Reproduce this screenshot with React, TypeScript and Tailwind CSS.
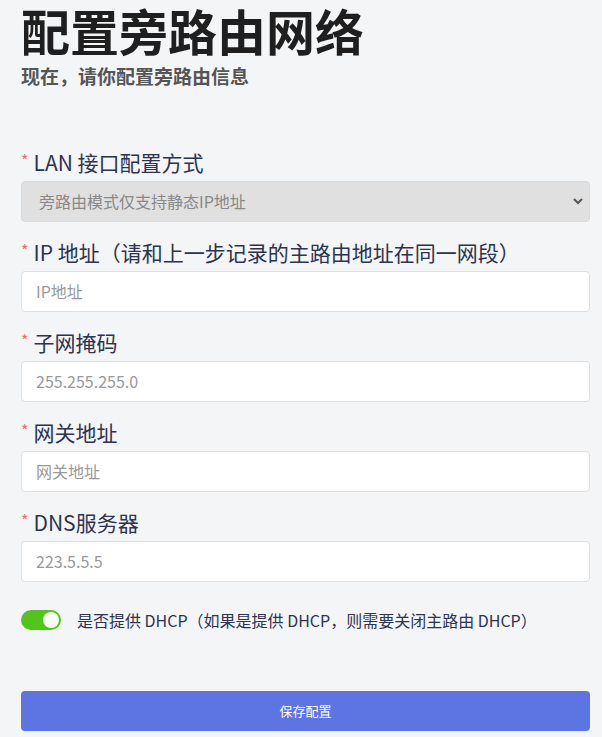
import React from "react";

const font = { fontFamily: '"Noto Sans CJK SC", "Noto Sans", sans-serif' };

function Label({ children }: { children: React.ReactNode }) {
  return (
    <div className="flex items-center h-7 mb-[5px] text-[21px] leading-7 text-[#2c3350]">
      <span className="text-[#f56c6c] text-[16px] mr-[5px] self-start leading-[20px] mt-[2px]">*</span>
      <span>{children}</span>
    </div>
  );
}

function Field({ label, placeholder }: { label: string; placeholder: string }) {
  return (
    <div className="mb-4">
      <Label>{label}</Label>
      <input
        placeholder={placeholder}
        className="w-full h-[41px] bg-white border border-[#dcdfe6] rounded-[4px] px-[14px] text-[16px] text-[#333] placeholder:text-[#999] outline-none"
      />
    </div>
  );
}

export default function App() {
  return (
    <div className="min-h-[737px] bg-[#f4f5f7] pl-[21px] pr-[12px]" style={font}>
      <h1 className="text-[49px] font-bold leading-[1.2] text-[#1f1f1f] pt-[1px]">配置旁路由网络</h1>
      <p className="text-[19px] font-bold text-[#555] leading-6 mt-[4px]">现在，请你配置旁路由信息</p>

      <div className="mt-[60px]">
        <div className="mb-4">
          <Label>LAN 接口配置方式</Label>
          <div className="relative">
            <select
              disabled
              className="appearance-none w-full h-[41px] bg-[#e0e0e0] border border-[#dadada] rounded-[4px] px-[17px] text-[16px] text-[#888] outline-none"
            >
              <option>旁路由模式仅支持静态IP地址</option>
            </select>
            <svg className="absolute right-[6px] top-[15px]" width="12" height="10" viewBox="0 0 12 10">
              <path d="M2 3 L6 7 L10 3" fill="none" stroke="#555" strokeWidth="2" />
            </svg>
          </div>
        </div>
        <Field label="IP 地址（请和上一步记录的主路由地址在同一网段）" placeholder="IP地址" />
        <Field label="子网掩码" placeholder="255.255.255.0" />
        <Field label="网关地址" placeholder="网关地址" />
        <Field label="DNS服务器" placeholder="223.5.5.5" />
      </div>

      <div className="flex items-center h-6 mt-[26px]">
        <div className="w-10 h-5 rounded-full bg-[#52c41a] relative shrink-0">
          <div className="absolute right-[2px] top-[2px] w-4 h-4 rounded-full bg-white" />
        </div>
        <span className="ml-[16px] text-[16px] leading-6 text-[#2c3350]">是否提供 DHCP（如果是提供 DHCP，则需要关闭主路由 DHCP）</span>
      </div>

      <button className="mt-[59px] w-full h-10 rounded-[4px] bg-[#5d74e3] text-white text-[13px]">保存配置</button>
    </div>
  );
}
